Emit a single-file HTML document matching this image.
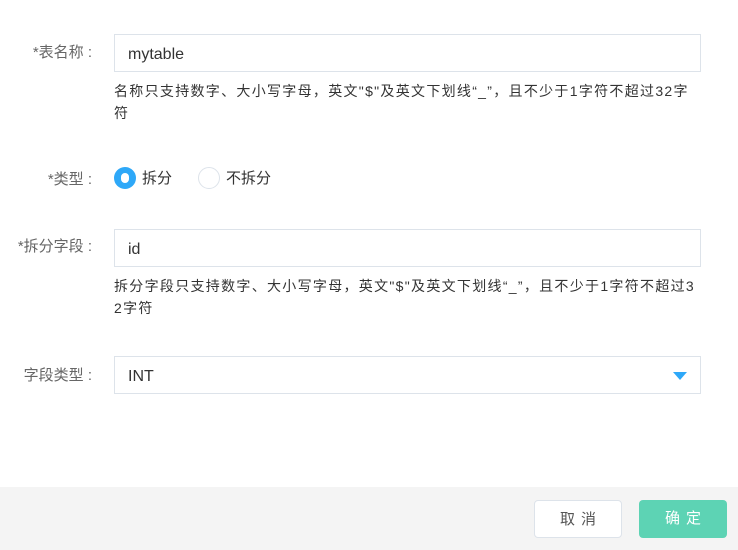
<!DOCTYPE html>
<html><head><meta charset="utf-8"><style>
*{margin:0;padding:0;box-sizing:border-box}
body{width:738px;height:550px;background:#fff;font-family:"Liberation Sans","Noto Sans CJK SC",sans-serif;position:relative;overflow:hidden;color:#333}
.lbl{position:absolute;right:646px;font-size:15px;color:#666;white-space:nowrap;line-height:20px}
.inp{position:absolute;left:114px;width:587px;height:38px;border:1px solid #dde3ea;font-size:16px;color:#333;padding-left:13px;line-height:40px}
.hint{position:absolute;left:114px;font-size:14px;color:#333;line-height:22px;white-space:nowrap;letter-spacing:1.3px}
.radio{position:absolute;width:22px;height:22px;border-radius:50%;top:167px}
.rt{position:absolute;top:169px;font-size:15px;line-height:20px;color:#333}
.footer{position:absolute;left:0;top:487px;width:738px;height:63px;background:#f4f4f4}
.btn{position:absolute;top:500px;width:88px;height:38px;border-radius:4px;font-size:15px;text-align:center;line-height:38px;letter-spacing:6px;text-indent:6px}
</style></head><body>
<div class="lbl" style="top:43px">*表名称 :</div>
<div class="inp" style="top:34px">mytable</div>
<div class="hint" style="top:80px">名称只支持数字、大小写字母，英文"$"及英文下划线“_”，且不少于1字符不超过32字<br>符</div>
<div class="lbl" style="top:170px">*类型 :</div>
<div class="radio" style="left:114px;background:#2ea8f8"><div style="position:absolute;left:7px;top:6px;width:8px;height:10px;border-radius:4px;background:#fff"></div></div>
<div class="rt" style="left:142px">拆分</div>
<div class="radio" style="left:198px;border:1px solid #dde3ea"></div>
<div class="rt" style="left:226px">不拆分</div>
<div class="lbl" style="top:237px">*拆分字段 :</div>
<div class="inp" style="top:229px">id</div>
<div class="hint" style="top:275px">拆分字段只支持数字、大小写字母，英文"$"及英文下划线“_”，且不少于1字符不超过3<br>2字符</div>
<div class="lbl" style="top:366px">字段类型 :</div>
<div class="inp" style="top:356px">INT<div style="position:absolute;right:13px;top:15px;width:0;height:0;border-left:7px solid transparent;border-right:7px solid transparent;border-top:8px solid #2ea8f8"></div></div>
<div class="footer"></div>
<div class="btn" style="left:534px;background:#fff;border:1px solid #dde3ea;color:#555">取消</div>
<div class="btn" style="left:639px;background:#5dd3b4;color:#fff">确定</div>
</body></html>
